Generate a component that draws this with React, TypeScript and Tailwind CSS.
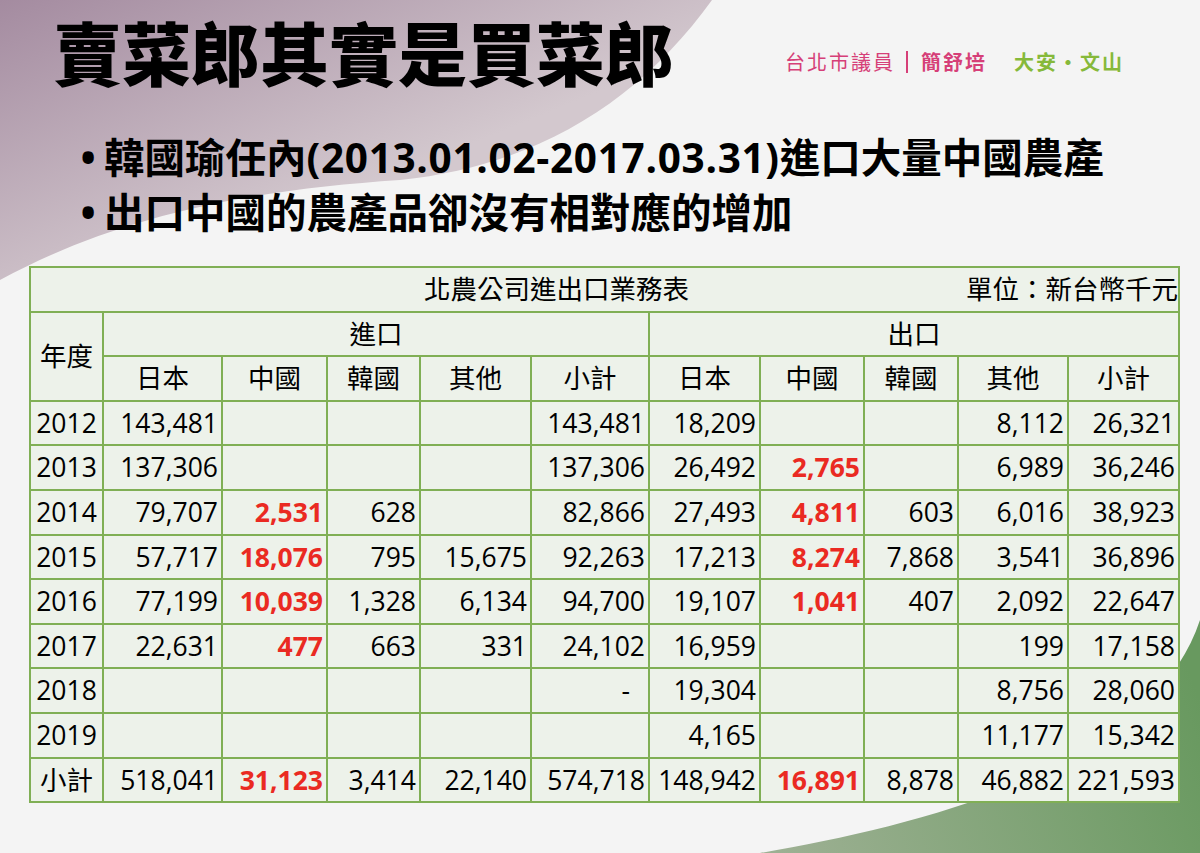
import React from "react";

const rows: string[][] = [
  ["2012", "143,481", "", "", "", "143,481", "18,209", "", "", "8,112", "26,321"],
  ["2013", "137,306", "", "", "", "137,306", "26,492", "2,765", "", "6,989", "36,246"],
  ["2014", "79,707", "2,531", "628", "", "82,866", "27,493", "4,811", "603", "6,016", "38,923"],
  ["2015", "57,717", "18,076", "795", "15,675", "92,263", "17,213", "8,274", "7,868", "3,541", "36,896"],
  ["2016", "77,199", "10,039", "1,328", "6,134", "94,700", "19,107", "1,041", "407", "2,092", "22,647"],
  ["2017", "22,631", "477", "663", "331", "24,102", "16,959", "", "", "199", "17,158"],
  ["2018", "", "", "", "", "-", "19,304", "", "", "8,756", "28,060"],
  ["2019", "", "", "", "", "", "4,165", "", "", "11,177", "15,342"],
  ["小計", "518,041", "31,123", "3,414", "22,140", "574,718", "148,942", "16,891", "8,878", "46,882", "221,593"],
];

const countries = ["日本", "中國", "韓國", "其他", "小計"];

// columns of the China figures are highlighted
const redCols = [2, 7];

const cell = "bg-[#edf2ea] flex items-center";

function Background() {
  return (
    <svg className="absolute inset-0" width="1200" height="853" viewBox="0 0 1200 853">
      <defs>
        <linearGradient id="purple" gradientUnits="userSpaceOnUse" x1="0" y1="0" x2="120" y2="290">
          <stop offset="0" stopColor="#a48ba0" />
          <stop offset="1" stopColor="#d3c8ce" />
        </linearGradient>
        <linearGradient id="green" gradientUnits="userSpaceOnUse" x1="780" y1="853" x2="1200" y2="700">
          <stop offset="0" stopColor="#9db093" />
          <stop offset="1" stopColor="#68995f" />
        </linearGradient>
      </defs>
      <path d="M0 0 L712 0 C640 100 540 165 400 180 C250 190 120 215 0 280 Z" fill="url(#purple)" />
      <path d="M760 853 C920 825 1150 770 1200 620 L1200 853 Z" fill="url(#green)" />
    </svg>
  );
}

export default function App() {
  return (
    <div
      className="relative w-[1200px] h-[853px] overflow-hidden bg-[#f4f4f4] text-black"
      style={{ fontFamily: '"Open Sans", "Noto Sans CJK TC", sans-serif' }}
    >
      <Background />

      <div className="relative flex flex-col">
        {/* Header */}
        <div className="flex items-start justify-between">
          <h1
            className="ml-[53px] mt-[17px] text-[69px] leading-[69px] font-black"
            style={{ fontFamily: '"Noto Sans CJK TC", sans-serif' }}
          >
            賣菜郎其實是買菜郎
          </h1>
          <div
            className="mt-[48px] mr-[76px] flex items-center text-[20px] leading-[28px] tracking-[2px]"
            style={{ fontFamily: '"Noto Sans CJK TC", sans-serif' }}
          >
            <span className="text-[#d63f78]">台北市議員</span>
            <span className="ml-[11px] mr-[13px] h-[22px] w-[2px] bg-[#d63f78]" />
            <span className="text-[#d63f78] font-bold">簡舒培</span>
            <span className="ml-[27px] text-[#86b93a] font-bold">大安・文山</span>
          </div>
        </div>

        {/* Bullets */}
        <div className="mt-[44px] flex flex-col text-[40.5px] leading-[55px] font-bold">
          <div className="flex pl-[72px]">
            <span className="w-[32px] text-center">•</span>
            <span>
              韓國瑜任內<span className="tracking-[0.7px]">(2013.01.02-2017.03.31)</span>進口大量中國農產
            </span>
          </div>
          <div className="flex pl-[72px]">
            <span className="w-[32px] text-center">•</span>
            <span>出口中國的農產品卻沒有相對應的增加</span>
          </div>
        </div>

        {/* Table */}
        <div className="mt-[26px] ml-[29px] w-[1151px] grid grid-cols-[71px_117px_103px_91px_109px_116px_109px_102px_92px_108px_109px] grid-rows-[repeat(12,42.6px)] gap-[2px] p-[2px] bg-[#80af55] text-[26.5px] leading-none">
          <div className={`${cell} col-span-11 justify-between pl-[393px]`}>
            <span>北農公司進出口業務表</span>
            <span>單位：新台幣千元</span>
          </div>

          <div className={`${cell} row-span-2 justify-center`}>年度</div>
          <div className={`${cell} col-span-5 justify-center`}>進口</div>
          <div className={`${cell} col-span-5 justify-center`}>出口</div>
          {[...countries, ...countries].map((c, i) => (
            <div key={i} className={`${cell} justify-center`}>
              {c}
            </div>
          ))}

          {rows.map((row) =>
            row.map((v, j) => {
              if (j === 0) {
                return (
                  <div key={row[0] + j} className={`${cell} justify-center`}>
                    {v}
                  </div>
                );
              }
              const red = redCols.includes(j);
              return (
                <div
                  key={row[0] + j}
                  className={`${cell} justify-end ${v === "-" ? "pr-[18px]" : "pr-[3px]"} ${
                    red ? "text-[#ea2a22] font-bold" : ""
                  }`}
                >
                  {v}
                </div>
              );
            })
          )}
        </div>
      </div>
    </div>
  );
}
